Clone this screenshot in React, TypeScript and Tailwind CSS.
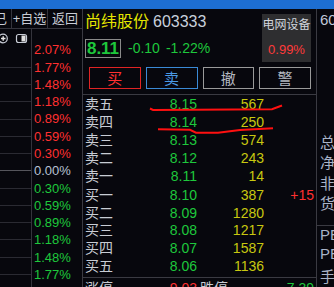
import React from "react";

const PCTS: { v: string; c: string }[] = [
  { v: "2.07%", c: "text-[#ff3030]" },
  { v: "1.77%", c: "text-[#ff3030]" },
  { v: "1.48%", c: "text-[#ff3030]" },
  { v: "1.18%", c: "text-[#ff3030]" },
  { v: "0.89%", c: "text-[#ff3030]" },
  { v: "0.59%", c: "text-[#ff3030]" },
  { v: "0.30%", c: "text-[#ff3030]" },
  { v: "0.00%", c: "text-[#b8c2d4]" },
  { v: "0.30%", c: "text-[#1ec83c]" },
  { v: "0.59%", c: "text-[#1ec83c]" },
  { v: "0.89%", c: "text-[#1ec83c]" },
  { v: "1.18%", c: "text-[#1ec83c]" },
  { v: "1.48%", c: "text-[#1ec83c]" },
  { v: "1.77%", c: "text-[#1ec83c]" },
];

const SELLS = [
  { label: "卖五", price: "8.15", vol: "567" },
  { label: "卖四", price: "8.14", vol: "250" },
  { label: "卖三", price: "8.13", vol: "574" },
  { label: "卖二", price: "8.12", vol: "243" },
  { label: "卖一", price: "8.11", vol: "14" },
];

const BUYS = [
  { label: "买一", price: "8.10", vol: "387", extra: "+15" },
  { label: "买二", price: "8.09", vol: "1280", extra: "" },
  { label: "买三", price: "8.08", vol: "1217", extra: "" },
  { label: "买四", price: "8.07", vol: "1587", extra: "" },
  { label: "买五", price: "8.06", vol: "1136", extra: "" },
];

function LeftSection() {
  return (
    <div className="w-[82px] flex flex-col">
      <div className="h-[20px] flex border-b border-[#34343c] text-[13px] leading-[20px] text-[#c8ccd6]">
        <div className="w-[11px] overflow-hidden">
          <span className="block -ml-[6px]">已</span>
        </div>
        <div className="w-px bg-[#34343c]" />
        <div className="w-[35px] flex justify-center whitespace-nowrap">+自选</div>
        <div className="w-px bg-[#34343c]" />
        <div className="w-[34px] flex justify-center whitespace-nowrap">返回</div>
      </div>
      <div className="flex flex-1">
        <div className="w-[31px] flex flex-col">
          <div className="h-[17px]">
            <svg width="31" height="17" viewBox="0 0 31 17">
              <circle cx="3" cy="9.5" r="4.3" fill="none" stroke="#c8ccd6" strokeWidth="1.2" />
              <path d="M1 9.5h4.5M3.2 7.3v4.4" stroke="#e8e8e8" strokeWidth="1.4" />
              <rect x="16.5" y="5.5" width="10" height="8" rx="2" fill="none" stroke="#c8ccd6" strokeWidth="1.2" />
              <rect x="21.5" y="6.5" width="4" height="6" fill="#e0e0e0" />
            </svg>
          </div>
          <div className="h-[12.7px]" />
          {PCTS.slice(1).map((p, i) => (
            <div key={i} className="h-[17.28px] flex items-center">
              <div className={`w-full h-px ${p.v === "0.00%" ? "bg-[#55555c]" : "bg-[#2a2a32]"}`} />
            </div>
          ))}
        </div>
        <div className="w-px bg-[#34343c]" />
        <div className="w-[50px] pt-[12.4px] pl-[2px]">
          {PCTS.map((p, i) => (
            <div key={i} className={`h-[17.28px] text-[13px] leading-[17.28px] ${p.c}`}>
              {p.v}
            </div>
          ))}
        </div>
      </div>
    </div>
  );
}

function Main() {
  return (
    <div className="w-[233px] flex flex-col">
      <div className="pr-[5px] pt-[3px] pb-[5px] border-b border-[#3a3a42]">
        <div className="flex items-start justify-between h-[50px]">
          <div className="pl-[2px]">
            <div className="flex items-center h-[20px] text-[16px] leading-[20px]">
              <span className="text-[#e6e600]">尚纬股份</span>
              <span className="ml-[4px] text-[#c8d0dc]">603333</span>
            </div>
            <div className="mt-[7px] flex items-center h-[19px]">
              <div className="h-[19px] w-[36px] border border-[#8a8a8a] flex items-center justify-center text-[17px] font-bold leading-none text-[#1ec83c]">
                8.11
              </div>
              <span className="ml-[7px] text-[14px] text-[#1ec83c]">-0.10</span>
              <span className="ml-[6px] text-[14px] text-[#1ec83c]">-1.22%</span>
            </div>
          </div>
          <div className="mt-[2px] w-[49px] h-[48px] bg-[#2e2e30] flex flex-col items-center whitespace-nowrap">
            <span className="mt-[2px] text-[12px] leading-[18px] text-[#d0d4dc]">电网设备</span>
            <span className="mt-[7px] text-[13px] leading-[18px] text-[#ff3a3a]">0.99%</span>
          </div>
        </div>
        <div className="mt-[5px] pl-[6px] flex gap-[5px] text-[15px]">
          <button className="w-[52px] h-[22px] border border-[#e02424] text-[#ff3030] leading-none">买</button>
          <button className="w-[52px] h-[22px] border border-[#3a8ad6] text-[#4a9ae6] leading-none">卖</button>
          <button className="w-[52px] h-[22px] border border-[#9a9a9a] text-[#b4b8c0] leading-none">撤</button>
          <button className="w-[52px] h-[22px] border border-[#9a9a9a] text-[#b4b8c0] leading-none">警</button>
        </div>
      </div>
      {SELLS.map((r) => (
        <div key={r.label} className="h-[18px] flex items-center text-[14px] leading-[18px]">
          <span className="w-[60px] pl-[2px] text-[#c8ccd4]">{r.label}</span>
          <span className="w-[54px] text-right text-[#1ec83c]">{r.price}</span>
          <span className="w-[67px] text-right text-[#c8c810]">{r.vol}</span>
        </div>
      ))}
      <div className="flex h-px">
        <div className="w-[179px] bg-[#d08a2a]" />
        <div className="flex-1 bg-[#3a8ad6]" />
      </div>
      <div className="pt-[2px]">
        {BUYS.map((r) => (
          <div key={r.label} className="h-[17.65px] flex items-center text-[14px] leading-[17.65px]">
            <span className="w-[60px] pl-[2px] text-[#c8ccd4]">{r.label}</span>
            <span className="w-[54px] text-right text-[#1ec83c]">{r.price}</span>
            <span className="w-[67px] text-right text-[#c8c810]">{r.vol}</span>
            <span className="w-[50px] text-right text-[#ff3030]">{r.extra}</span>
          </div>
        ))}
      </div>
      <div className="mt-[1.75px] border-t border-[#3a3a42] flex h-[18px] text-[14px] leading-[18px] pt-[1px]">
        <span className="w-[60px] pl-[2px] text-[#c8ccd4]">涨停</span>
        <span className="w-[54px] text-right text-[#ff3030]">9.03</span>
        <span className="ml-[3px] text-[#c8ccd4]">跌停</span>
        <span className="flex-1 text-right pr-[2px] text-[#1ec83c]">7.39</span>
      </div>
    </div>
  );
}

function RightPeek() {
  return (
    <div className="w-[17px] overflow-hidden flex flex-col pl-[3px] text-[15px] text-[#aab4c8] whitespace-nowrap">
      <div className="h-[22px] leading-[22px] text-[#c0c8d8]">60</div>
      <div className="h-[106px]" />
      <div className="h-[20px] leading-[20px]">总</div>
      <div className="h-[20px] leading-[20px]">净</div>
      <div className="h-[20px] leading-[20px] mt-[1px]">非</div>
      <div className="h-[20px] leading-[20px]">货</div>
      <div className="h-[12px]" />
      <div className="-ml-[3px] h-px bg-[#3a3a42]" />
      <div className="h-[18px] leading-[18px]">PE</div>
      <div className="h-[18px] leading-[18px] mt-[1px]">PE</div>
      <div className="h-[20px] leading-[20px] mt-[4px]">手</div>
    </div>
  );
}

export default function App() {
  return (
    <div className="relative w-[334px] h-[287px] overflow-hidden bg-[#07070d] font-['Liberation_Sans','Noto_Sans_CJK_SC',sans-serif]">
      <div className="h-[9px] bg-[#1d6ed2]" />
      <div className="flex h-[278px]">
        <LeftSection />
        <div className="w-px bg-[#3a3a42]" />
        <Main />
        <div className="w-px bg-[#3a3a42]" />
        <RightPeek />
      </div>
      <svg className="absolute left-0 top-0 pointer-events-none" width="334" height="287" viewBox="0 0 334 287">
        <polyline
          points="150,108.5 153,110 272,109.3 282,105.5"
          fill="none"
          stroke="#ff1010"
          strokeWidth="2"
        />
        <polyline
          points="158,129.3 190,129.8 196,132.7 218,132.7 240,130 273,128.3"
          fill="none"
          stroke="#ff1010"
          strokeWidth="2"
        />
      </svg>
    </div>
  );
}
